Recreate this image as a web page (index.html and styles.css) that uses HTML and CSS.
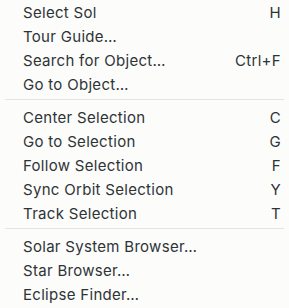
FILE: index.html
```html
<!DOCTYPE html>
<html lang="en">
<head>
    <meta charset="UTF-8">
    <title>Navigation menu</title>
    <link rel="stylesheet" href="styles.css">
</head>
<body>
    <div class="menu">
        <div class="item"><span class="label">Select Sol</span><span class="accel">H</span></div>
        <div class="item"><span class="label">Tour Guide…</span></div>
        <div class="item"><span class="label">Search for Object…</span><span class="accel">Ctrl+F</span></div>
        <div class="item"><span class="label">Go to Object…</span></div>
        <div class="separator"></div>
        <div class="item"><span class="label">Center Selection</span><span class="accel">C</span></div>
        <div class="item"><span class="label">Go to Selection</span><span class="accel">G</span></div>
        <div class="item"><span class="label">Follow Selection</span><span class="accel">F</span></div>
        <div class="item"><span class="label">Sync Orbit Selection</span><span class="accel">Y</span></div>
        <div class="item"><span class="label">Track Selection</span><span class="accel">T</span></div>
        <div class="separator"></div>
        <div class="item"><span class="label">Solar System Browser…</span></div>
        <div class="item"><span class="label">Star Browser…</span></div>
        <div class="item"><span class="label">Eclipse Finder…</span></div>
    </div>
</body>
</html>
```

FILE: styles.css
```css
body { margin: 0; background: #fcfcfb; font-family: Inter, sans-serif; font-size: 15px; letter-spacing: 0.3px; color: #2e3436; }
.menu { display: flex; flex-direction: column; }
.item { display: flex; align-items: center; justify-content: space-between; height: 24px; padding: 0 8px 0 23px; }
.separator { height: 1px; background: #e4e4e2; margin: 3px 5px 5px; }
```
